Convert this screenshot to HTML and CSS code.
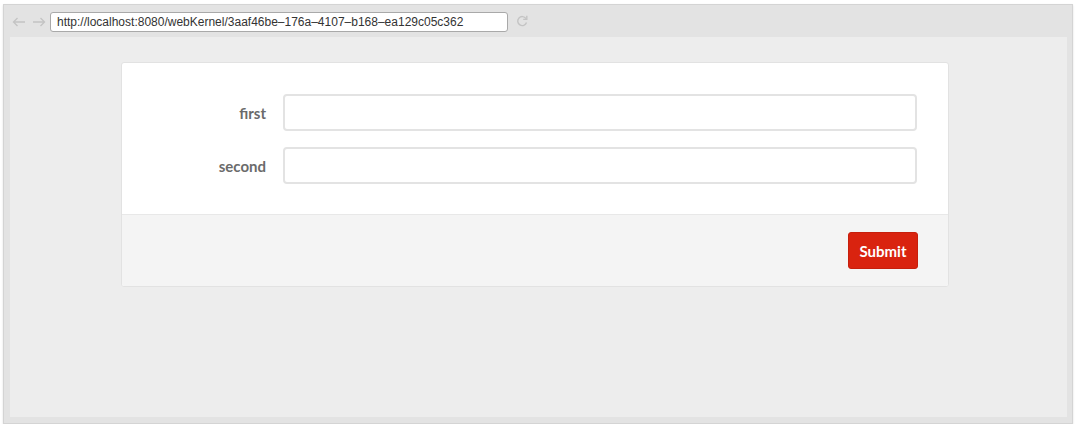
FILE: index.html
```html
<!DOCTYPE html>
<html>
<head>
<meta charset="utf-8">
<link rel="stylesheet" href="styles.css">
</head>
<body>
<div class="window">
  <div class="toolbar">
    <svg class="nav" width="14" height="10" viewBox="0 0 14 10"><path d="M13 5H1.5M5.5 1L1.5 5L5.5 9" fill="none" stroke="#c4c4c4" stroke-width="1.4"/></svg>
    <svg class="nav" width="14" height="10" viewBox="0 0 14 10"><path d="M1 5H12.5M8.5 1L12.5 5L8.5 9" fill="none" stroke="#c4c4c4" stroke-width="1.4"/></svg>
    <div class="url">http://localhost:8080/webKernel/3aaf46be–176a–4107–b168–ea129c05c362</div>
    <svg class="reload" width="12" height="12" viewBox="0 0 12 12"><path d="M10 3.6A4.5 4.5 0 1 0 10.5 7.5" fill="none" stroke="#c4c4c4" stroke-width="1.4"/><path d="M10.8 0.8V4.4H7.2" fill="none" stroke="#c4c4c4" stroke-width="1.4"/></svg>
  </div>
  <div class="content">
    <div class="card">
      <div class="card-body">
        <div class="row">
          <label class="label">first</label>
          <div class="input"></div>
        </div>
        <div class="row">
          <label class="label">second</label>
          <div class="input"></div>
        </div>
      </div>
      <div class="card-footer">
        <button class="btn">Submit</button>
      </div>
    </div>
  </div>
</div>
</body>
</html>
```
FILE: styles.css
```css
html, body {
  margin: 0;
  padding: 0;
  background: #ffffff;
}
body {
  padding: 4px 4px 0 3px;
  font-family: Lato, "Open Sans", sans-serif;
}
.window {
  border: 1px solid #d4d4d4;
  background: #e3e3e3;
  box-shadow: 0 1px 2px rgba(0,0,0,0.12);
  display: flex;
  flex-direction: column;
  padding: 0 5px 6px 6px;
  box-sizing: content-box;
  width: 1057px;
  height: 412px;
}
.toolbar {
  height: 32px;
  display: flex;
  align-items: center;
  padding-left: 2px;
}
.nav {
  margin-right: 6px;
  margin-top: 1px;
}
.nav + .nav {
  margin-right: 4px;
}
.url {
  width: 450px;
  height: 18px;
  border: 1px solid #a9a9a9;
  border-radius: 3px;
  background: #fff;
  font-family: "Liberation Sans", Arial, sans-serif;
  font-size: 12px;
  color: #333;
  line-height: 18px;
  padding-left: 6px;
  margin-top: 1px;
  white-space: nowrap;
  overflow: hidden;
}
.reload {
  margin-left: 8px;
}
.content {
  flex: 1;
  background: #ededed;
  padding: 25px 0 0 111px;
}
.card {
  width: 826px;
  border: 1px solid #e2e2e2;
  border-radius: 3px;
  background: #fff;
  overflow: hidden;
}
.card-body {
  padding: 31px 31px 30px 0;
  display: flex;
  flex-direction: column;
  gap: 16px;
}
.row {
  display: flex;
  align-items: center;
}
.label {
  width: 144px;
  text-align: right;
  font-size: 15px;
  font-weight: 700;
  color: #6b6b6b;
  padding-right: 17px;
}
.input {
  flex: 1;
  height: 33px;
  border: 2px solid #e3e3e3;
  border-radius: 4px;
  background: #fff;
}
.card-footer {
  background: #f4f4f4;
  border-top: 1px solid #e8e8e8;
  padding: 17px 30px 17px 0;
  display: flex;
  justify-content: flex-end;
}
.btn {
  width: 70px;
  height: 37px;
  border: 1px solid #c61f0c;
  border-radius: 3px;
  background: #d9230f;
  color: #fff;
  font-family: Lato, "Open Sans", sans-serif;
  font-size: 15px;
  font-weight: 700;
  padding: 0;
}
```
